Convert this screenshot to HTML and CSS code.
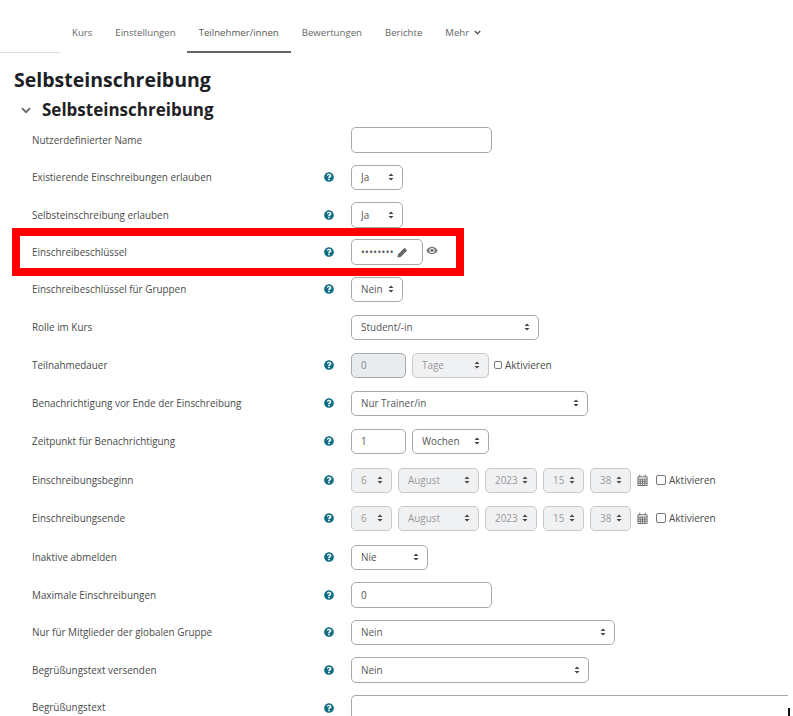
FILE: index.html
```html
<!DOCTYPE html>
<html lang="de">
<head>
    <meta charset="UTF-8">
    <title>Selbsteinschreibung</title>
    <link rel="stylesheet" href="styles.css">
</head>
<body>
    <svg class="defs" width="0" height="0">
        <symbol id="help" viewBox="0 0 512 512"><path d="M504 256c0 137-111 248-248 248S8 393 8 256 119 8 256 8s248 111 248 248zM263 90c-54 0-89 23-116 63-4 5-3 12 2 16l35 26c5 4 13 3 17-2 18-22 30-35 57-35 20 0 45 13 45 32 0 15-12 22-32 33-23 13-54 29-54 70v6c0 7 5 12 12 12h56c7 0 12-5 12-12v-2c0-28 83-29 83-106 0-58-60-101-117-101zm-7 246c-25 0-46 21-46 46s21 46 46 46 46-21 46-46-21-46-46-46z"/></symbol>
        <symbol id="cal" viewBox="0 0 12 13"><path d="M1 3h10v9.500H1zM3 .7v2.600M9 .7v2.600M1 5.500h10M1 7.800h10M1 10h10M3.500 5.500v7M6 5.500v7M8.500 5.500v7" fill="none" stroke="#666" stroke-width="1"/></symbol>
    </svg>

    <nav class="kursnav">
        <a href="#">Kurs</a>
        <a href="#">Einstellungen</a>
        <a href="#" class="aktiv">Teilnehmer/innen</a>
        <a href="#">Bewertungen</a>
        <a href="#">Berichte</a>
        <a href="#">Mehr <svg class="chevron" width="7" height="5" viewBox="0 0 7 5"><path d="M.8 1l2.700 2.700L6.200 1" fill="none" stroke="#555" stroke-width="1.400"/></svg></a>
    </nav>

    <main class="inhalt">
        <h1>Selbsteinschreibung</h1>
        <h2><svg width="10" height="7" viewBox="0 0 10 7"><path d="M1 1.200l4 4 4-4" fill="none" stroke="#666" stroke-width="1.800"/></svg>Selbsteinschreibung</h2>

        <form class="formular">
            <div class="zeile eng">
                <label>Nutzerdefinierter Name</label>
                <span class="hilfe"></span>
                <div class="felder"><input class="w141" type="text"></div>
            </div>
            <div class="zeile eng">
                <label>Existierende Einschreibungen erlauben</label>
                <span class="hilfe"><svg><use href="#help"/></svg></span>
                <div class="felder"><select class="w52"><option>Ja</option></select></div>
            </div>
            <div class="zeile eng">
                <label>Selbsteinschreibung erlauben</label>
                <span class="hilfe"><svg><use href="#help"/></svg></span>
                <div class="felder"><select class="w52"><option>Ja</option></select></div>
            </div>
            <div class="zeile markiert">
                <label>Einschreibeschlüssel</label>
                <span class="hilfe"><svg><use href="#help"/></svg></span>
                <div class="felder">
                    <div class="schluessel">
                        <span>••••••••</span>
                        <svg width="11" height="11" viewBox="0 0 11 11"><path d="M7.600.8l2.600 2.600-6.500 6.500-3.300.7.700-3.300z" fill="#666"/></svg>
                    </div>
                    <svg class="auge" width="12" height="9" viewBox="0 0 13 9"><path d="M.4 4.500C2 1.800 4 .5 6.500.5s4.500 1.300 6.100 4C11 7.200 9 8.500 6.500 8.500S2 7.200.4 4.500z" fill="#777"/><circle cx="6.500" cy="4.500" r="2.800" fill="#fff"/><circle cx="6.500" cy="4.500" r="1.800" fill="#777"/></svg>
                </div>
            </div>
            <div class="zeile">
                <label>Einschreibeschlüssel für Gruppen</label>
                <span class="hilfe"><svg><use href="#help"/></svg></span>
                <div class="felder"><select class="w52"><option>Nein</option></select></div>
            </div>
            <div class="zeile">
                <label>Rolle im Kurs</label>
                <span class="hilfe"></span>
                <div class="felder"><select class="w188"><option>Student/-in</option></select></div>
            </div>
            <div class="zeile">
                <label>Teilnahmedauer</label>
                <span class="hilfe"><svg><use href="#help"/></svg></span>
                <div class="felder">
                    <input class="w55" type="text" value="0" disabled>
                    <select class="w77" disabled><option>Tage</option></select>
                    <span class="aktivieren klein"><input type="checkbox">Aktivieren</span>
                </div>
            </div>
            <div class="zeile">
                <label>Benachrichtigung vor Ende der Einschreibung</label>
                <span class="hilfe"><svg><use href="#help"/></svg></span>
                <div class="felder"><select class="w237"><option>Nur Trainer/in</option></select></div>
            </div>
            <div class="zeile weit">
                <label>Zeitpunkt für Benachrichtigung</label>
                <span class="hilfe"><svg><use href="#help"/></svg></span>
                <div class="felder">
                    <input class="w55" type="text" value="1">
                    <select class="w77"><option>Wochen</option></select>
                </div>
            </div>
            <div class="zeile">
                <label>Einschreibungsbeginn</label>
                <span class="hilfe"><svg><use href="#help"/></svg></span>
                <div class="felder">
                    <select class="w41" disabled><option>6</option></select>
                    <select class="w81" disabled><option>August</option></select>
                    <select class="w52" disabled><option>2023</option></select>
                    <select class="w41" disabled><option>15</option></select>
                    <select class="w41" disabled><option>38</option></select>
                    <svg class="kalender"><use href="#cal"/></svg>
                    <span class="aktivieren"><input type="checkbox">Aktivieren</span>
                </div>
            </div>
            <div class="zeile weit">
                <label>Einschreibungsende</label>
                <span class="hilfe"><svg><use href="#help"/></svg></span>
                <div class="felder">
                    <select class="w41" disabled><option>6</option></select>
                    <select class="w81" disabled><option>August</option></select>
                    <select class="w52" disabled><option>2023</option></select>
                    <select class="w41" disabled><option>15</option></select>
                    <select class="w41" disabled><option>38</option></select>
                    <svg class="kalender"><use href="#cal"/></svg>
                    <span class="aktivieren"><input type="checkbox">Aktivieren</span>
                </div>
            </div>
            <div class="zeile eng">
                <label>Inaktive abmelden</label>
                <span class="hilfe"><svg><use href="#help"/></svg></span>
                <div class="felder"><select class="w77"><option>Nie</option></select></div>
            </div>
            <div class="zeile eng">
                <label>Maximale Einschreibungen</label>
                <span class="hilfe"><svg><use href="#help"/></svg></span>
                <div class="felder"><input class="w141" type="text" value="0"></div>
            </div>
            <div class="zeile eng">
                <label>Nur für Mitglieder der globalen Gruppe</label>
                <span class="hilfe"><svg><use href="#help"/></svg></span>
                <div class="felder"><select class="w264"><option>Nein</option></select></div>
            </div>
            <div class="zeile eng">
                <label>Begrüßungstext versenden</label>
                <span class="hilfe"><svg><use href="#help"/></svg></span>
                <div class="felder"><select class="w238"><option>Nein</option></select></div>
            </div>
            <div class="zeile">
                <label>Begrüßungstext</label>
                <span class="hilfe"><svg><use href="#help"/></svg></span>
                <div class="felder"><textarea></textarea><span class="rand"></span></div>
            </div>
        </form>
    </main>
</body>
</html>
```

FILE: styles.css
```css
html, body {
    height: 716px;
    overflow: hidden;
}

body {
    font-family: "Open Sans", "Noto Sans", sans-serif;
    background-color: #fff;
    color: #4a4a4a;
    margin: 0;
    font-size: 9.9px;
}

.defs {
    display: block;
    height: 0;
}

.kursnav {
    display: flex;
    height: 53px;
    padding-left: 60px;
    background: linear-gradient(#ddd, #ddd) 0 100% / 60px 1px no-repeat;
}

.kursnav a {
    display: block;
    padding: 26px 12px 0;
    margin-right: -1px;
    color: #666;
    text-decoration: none;
    font-size: 9.650px;
    line-height: 13px;
}

.kursnav a.aktiv {
    color: #555;
    border-bottom: 2px solid #666;
}

.chevron {
    margin-left: 2px;
    vertical-align: 1px;
}

.inhalt {
    padding: 13px 0 0 14px;
}

h1 {
    margin: 0;
    font-size: 19.500px;
    line-height: 27px;
    font-weight: 700;
    color: #1d2125;
}

h2 {
    display: flex;
    align-items: center;
    gap: 11px;
    margin: 4px 0 0 7px;
    font-size: 17px;
    line-height: 26px;
    font-weight: 700;
    color: #1d2125;
}

.formular {
    margin-top: 4px;
}

.zeile {
    display: flex;
    align-items: center;
    height: 25.500px;
    margin-bottom: 12.500px;
    padding-left: 18px;
}

.zeile.eng {
    margin-bottom: 12px;
}

.zeile.weit {
    margin-bottom: 13.500px;
}

.zeile label {
    width: 288px;
    flex: none;
}

.hilfe {
    width: 31px;
    flex: none;
    display: flex;
}

.hilfe svg {
    width: 10px;
    height: 10px;
    margin-left: 4px;
    fill: #0f6e84;
}

.felder {
    display: flex;
    align-items: center;
    gap: 6px;
    flex: 1;
}

input[type="text"], select, textarea, .schluessel {
    box-sizing: border-box;
    height: 25.500px;
    margin: 0;
    padding: 0 9px;
    border: 1px solid #a9a9a9;
    border-radius: 5px;
    background-color: #fff;
    color: #555;
    font-family: inherit;
    font-size: 9.9px;
}

select {
    appearance: none;
    -webkit-appearance: none;
    background-image: url("data:image/svg+xml,%3Csvg xmlns='http://www.w3.org/2000/svg' width='6' height='8'%3E%3Cpath d='M3 .5L5.500 3H.5zM3 7.500L.5 5h5z' fill='%23444'/%3E%3C/svg%3E");
    background-repeat: no-repeat;
    background-position: right 8.500px center;
}

input:disabled, select:disabled {
    color: #999;
    background-color: #f0f1f3;
    border-color: #c8c8c8;
    opacity: 1;
}

input[type="text"]:disabled {
    background-color: #e9ecef;
    color: #888;
    border-color: #a9a9a9;
}

textarea {
    display: block;
    width: 437px;
    height: 60px;
    border-radius: 5px 0 0 0;
    border-right: 0;
    resize: none;
}

.zeile:last-child {
    align-items: flex-start;
}

.zeile:last-child label {
    margin-top: 5px;
}

.zeile:last-child .hilfe {
    margin-top: 8px;
}

.zeile:last-child .felder {
    position: relative;
}

.rand {
    position: absolute;
    left: 437px;
    top: 13px;
    width: 2px;
    height: 12px;
    background-color: #111;
}

.w41 { width: 41px; }
.w52 { width: 52px; }
.w55 { width: 55px; }
.w77 { width: 77px; }
.w81 { width: 81px; }
.w141 { width: 141px; }
.w188 { width: 188px; }
.w237 { width: 237px; }
.w238 { width: 238px; }
.w264 { width: 264px; }

.markiert {
    outline: 8px solid #f00;
    margin-left: 6px;
    margin-right: 337px;
    padding-left: 12px;
    height: 32px;
    margin-top: -3.500px;
    margin-bottom: 8.500px;
}

.schluessel {
    display: flex;
    align-items: center;
    gap: 3px;
    width: 72px;
    flex: none;
    padding-right: 0;
}

.schluessel span {
    letter-spacing: 0.400px;
    white-space: nowrap;
}

.auge {
    flex: none;
    margin: -4px 0 0 -3px;
}

.kalender {
    width: 11px;
    height: 12px;
    flex: none;
}

.aktivieren {
    display: flex;
    align-items: center;
    gap: 3px;
    margin-left: 2px;
    font-size: 10px;
}

.aktivieren input {
    width: 10px;
    height: 10px;
    margin: 0;
    appearance: none;
    -webkit-appearance: none;
    border: 1px solid #777;
    border-radius: 2px;
    background: #fff;
}

.aktivieren.klein {
    margin-left: -1px;
}

.aktivieren.klein input {
    width: 8px;
    height: 8px;
}
```
